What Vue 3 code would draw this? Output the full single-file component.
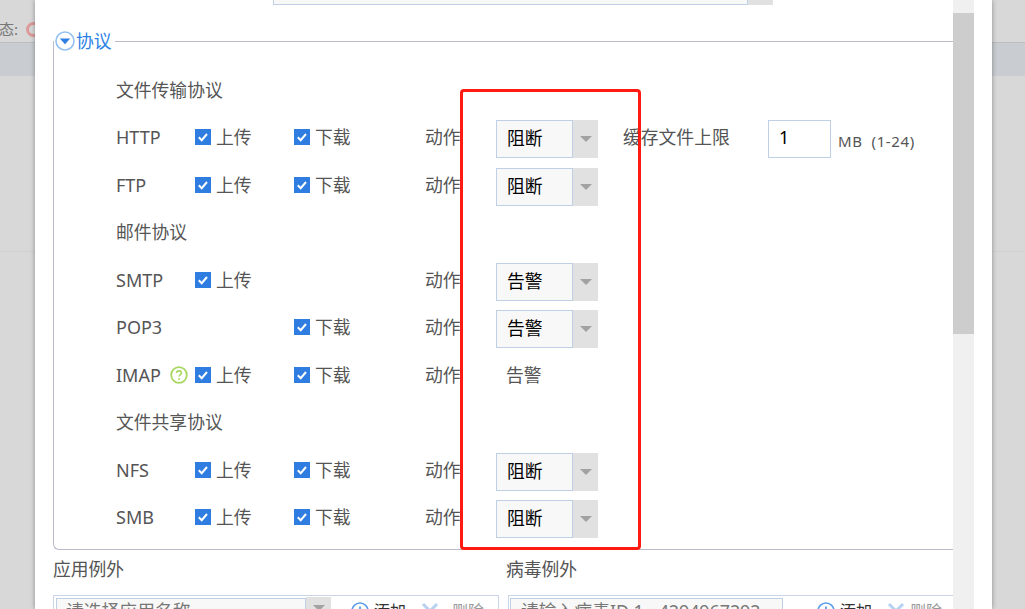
<script setup>
const rows = [
  { type: 'head', title: '文件传输协议' },
  { name: 'HTTP', up: true, down: true, action: '阻断', select: true, extra: true },
  { name: 'FTP', up: true, down: true, action: '阻断', select: true },
  { type: 'head', title: '邮件协议' },
  { name: 'SMTP', up: true, down: false, action: '告警', select: true },
  { name: 'POP3', up: false, down: true, action: '告警', select: true },
  { name: 'IMAP', help: true, up: true, down: true, action: '告警', select: false },
  { type: 'head', title: '文件共享协议' },
  { name: 'NFS', up: true, down: true, action: '阻断', select: true },
  { name: 'SMB', up: true, down: true, action: '阻断', select: true }
]
</script>

<template>
  <div class="page">
    <div class="backdrop">
      <div class="status-line">
        <span class="status-text">态:</span>
        <span class="status-dot"></span>
      </div>
      <div class="band"></div>
      <div class="rule"></div>
    </div>

    <div class="dialog">
      <div class="scroll-area">
        <div class="top-select">
          <div class="select-field wide"></div>
          <div class="select-arrow"><i class="tri"></i></div>
        </div>

        <div class="proto">
          <div class="proto-legend">
            <svg class="legend-icon" width="20" height="20" viewBox="0 0 20 20">
              <circle cx="10" cy="10" r="9" fill="#fff" stroke="#94c1f2" stroke-width="1.6" />
              <path d="M4.8 7.6h10.4L10 13.2z" fill="#2f7fe3" />
            </svg>
            <span>协议</span>
          </div>

          <template v-for="r in rows" :key="r.name || r.title">
            <div v-if="r.type === 'head'" class="row head">{{ r.title }}</div>
            <div v-else class="row">
              <div class="name">
                <span>{{ r.name }}</span>
                <svg v-if="r.help" class="help" width="18" height="18" viewBox="0 0 18 18">
                  <circle cx="9" cy="9" r="7.8" fill="#fff" stroke="#a9d862" stroke-width="1.8" />
                  <path d="M6.6 7.1c0-1.4 1-2.2 2.4-2.2s2.4.8 2.4 2.1c0 1.9-2.4 1.9-2.4 3.6" fill="none" stroke="#a9d862" stroke-width="1.6" />
                  <circle cx="9" cy="12.9" r="1" fill="#a9d862" />
                </svg>
              </div>
              <label class="check">
                <template v-if="r.up">
                  <svg class="box" width="16" height="16" viewBox="0 0 16 16">
                    <rect width="16" height="16" fill="#2f7de1" />
                    <path d="M3.8 8.2l2.9 3 5.3-6.2" fill="none" stroke="#fff" stroke-width="2" />
                  </svg>
                  <span>上传</span>
                </template>
              </label>
              <label class="check">
                <template v-if="r.down">
                  <svg class="box" width="16" height="16" viewBox="0 0 16 16">
                    <rect width="16" height="16" fill="#2f7de1" />
                    <path d="M3.8 8.2l2.9 3 5.3-6.2" fill="none" stroke="#fff" stroke-width="2" />
                  </svg>
                  <span>下载</span>
                </template>
              </label>
              <div class="action-label">动作</div>
              <div v-if="r.select" class="action-select">
                <div class="select-field">{{ r.action }}</div>
                <div class="select-arrow"><i class="tri"></i></div>
              </div>
              <div v-else class="action-plain">{{ r.action }}</div>
              <div v-if="r.extra" class="extra">
                <span class="extra-label">缓存文件上限</span>
                <div class="num-input">1</div>
                <span class="unit">MB&nbsp;&nbsp;(1-24)</span>
              </div>
            </div>
          </template>
        </div>

        <div class="exceptions">
          <section class="exc-col">
            <div class="exc-title">应用例外</div>
            <div class="exc-box">
              <div class="exc-select">
                <div class="select-field exc-field">请选择应用名称</div>
                <div class="select-arrow exc-arrow"><i class="tri"></i></div>
              </div>
              <div class="exc-actions">
                <span class="act add">
                  <svg width="18" height="18" viewBox="0 0 18 18"><circle cx="9" cy="9" r="8" fill="#fff" stroke="#5b9de8" stroke-width="1.6" /><path d="M9 4.5v9M4.5 9h9" stroke="#5b9de8" stroke-width="1.8" /></svg>
                  <span>添加</span>
                </span>
                <span class="act del">
                  <svg width="18" height="18" viewBox="0 0 18 18"><path d="M2 2l14 14M16 2L2 16" stroke="#b7d2f1" stroke-width="3" /></svg>
                  <span>删除</span>
                </span>
              </div>
            </div>
          </section>
          <section class="exc-col virus">
            <div class="exc-title">病毒例外</div>
            <div class="exc-box">
              <div class="select-field exc-field exc-input">请输入病毒ID 1 - 4294967292</div>
              <div class="exc-actions">
                <span class="act add">
                  <svg width="18" height="18" viewBox="0 0 18 18"><circle cx="9" cy="9" r="8" fill="#fff" stroke="#5b9de8" stroke-width="1.6" /><path d="M9 4.5v9M4.5 9h9" stroke="#5b9de8" stroke-width="1.8" /></svg>
                  <span>添加</span>
                </span>
                <span class="act del">
                  <svg width="18" height="18" viewBox="0 0 18 18"><path d="M2 2l14 14M16 2L2 16" stroke="#b7d2f1" stroke-width="3" /></svg>
                  <span>删除</span>
                </span>
              </div>
            </div>
          </section>
        </div>
      </div>

      <div class="scrollbar"><div class="thumb"></div></div>
    </div>

    <div class="annotation"></div>
  </div>
</template>

<style>
html, body { margin: 0; overflow: hidden; }
</style>

<style scoped>
.page {
  position: relative;
  width: 1025px;
  height: 609px;
  overflow: hidden;
  background: #d8d8d8;
  font-family: "Noto Sans", "Noto Sans CJK SC", sans-serif;
  color: #555;
  font-size: 17.8px;
}
.backdrop { display: flex; flex-direction: column; }
.status-line {
  height: 43px;
  display: flex;
  align-items: center;
  box-sizing: border-box;
  padding-top: 16px;
  margin-left: -1px;
  gap: 8px;
  border-bottom: 1px solid #bdbdbd;
  font-size: 15px;
  color: #777;
}
.status-text { line-height: 20px; }
.status-dot {
  flex: none;
  width: 15px;
  height: 15px;
  box-sizing: border-box;
  border: 3px solid #dc9a9a;
  border-radius: 50%;
}
.band { height: 33px; background: #c9ccd0; }
.rule { height: 175px; border-bottom: 1px solid #d0d0d0; }

.dialog {
  position: absolute;
  left: 35px;
  top: 0;
  width: 957px;
  height: 609px;
  background: #fff;
  box-shadow: 0 0 5px rgba(0, 0, 0, .35);
  display: flex;
}
.scroll-area {
  width: 918px;
  padding-left: 18px;
  box-sizing: border-box;
  overflow: hidden;
}
.scrollbar {
  width: 21px;
  height: 609px;
  background: #f0f0f0;
  padding-top: 13px;
  box-sizing: border-box;
}
.thumb { height: 321px; background: #cdcdcd; }

.top-select {
  display: flex;
  height: 38px;
  margin: -33px 0 0 220px;
}
.select-field {
  box-sizing: border-box;
  width: 77px;
  height: 38px;
  background: #f8f8f8;
  border: 1px solid #bfd0e4;
  color: #000;
  line-height: 36px;
  padding-left: 10px;
}
.select-field.wide { width: 475px; }
.select-arrow {
  width: 25px;
  height: 38px;
  background: #e1e1e1;
  display: flex;
  align-items: center;
  justify-content: center;
}
.tri {
  width: 0;
  height: 0;
  border-left: 6px solid transparent;
  border-right: 6px solid transparent;
  border-top: 6px solid #a2a2a2;
}

.proto {
  position: relative;
  box-sizing: border-box;
  width: 910px;
  height: 509px;
  margin-top: 36px;
  padding: 24.75px 0 0 62px;
  border: 1px solid #b9bbc8;
  border-right: 0;
  border-radius: 0 0 0 6px;
}
.proto-legend {
  position: absolute;
  left: 0;
  top: -13px;
  padding: 0 3px 0 1px;
  background: #fff;
  display: flex;
  align-items: center;
  gap: 1px;
  color: #2c81e4;
  height: 24px;
  line-height: 22px;
}
.legend-icon { display: block; }

.row {
  box-sizing: border-box;
  height: 47.5px;
  padding-bottom: 2px;
  display: flex;
  align-items: center;
  line-height: 24px;
  white-space: nowrap;
}
.name {
  width: 79px;
  display: flex;
  align-items: center;
  gap: 9px;
  font-size: 18px;
}
.help { flex: none; }
.check {
  width: 99px;
  display: flex;
  align-items: center;
  gap: 5px;
}
.check + .check { width: 131px; }
.box { flex: none; }
.action-label { width: 71px; }
.action-select { display: flex; margin-top: 4px; }
.action-select .select-field { line-height: 34px; }
.action-plain { padding-left: 10px; }
.extra {
  display: flex;
  align-items: center;
  margin-left: 25px;
}
.extra-label { width: 145px; margin-left: -1px; padding-left: 1px; }
.num-input {
  box-sizing: border-box;
  width: 63px;
  height: 38px;
  margin-top: 4px;
  border: 1px solid #bfd0e4;
  color: #000;
  line-height: 32px;
  padding-left: 10px;
}
.unit {
  margin-left: 7px;
  font-size: 15px;
  margin-top: 8px;
  letter-spacing: .6px;
}

.exceptions {
  display: flex;
  width: 900px;
  margin-top: 7px;
}
.exc-col { width: 453px; flex: none; }
.exc-col.virus { width: 447px; }
.exc-title { height: 38px; line-height: 24px; }
.exc-box {
  box-sizing: border-box;
  width: 446px;
  height: 60px;
  border: 1px solid #c9d6e8;
  padding: 2px;
  display: flex;
}
.virus .exc-box { margin-left: 2px; width: 448px; padding-left: 1px; }
.exc-select { display: flex; }
.exc-field {
  width: 250px;
  height: 30px;
  color: #777;
  line-height: 24px;
  padding-left: 9px;
}
.exc-input { width: 273px; padding-left: 10px; }
.exc-arrow { height: 22px; margin-top: -1px; }
.exc-actions {
  display: flex;
  align-items: flex-start;
  padding-top: 3px;
  margin-left: 20px;
  gap: 15px;
}
.virus .exc-actions { margin-left: 34px; }
.act {
  display: flex;
  align-items: center;
  gap: 5px;
  font-size: 16px;
  line-height: 20px;
}
.act.add { color: #333; }
.act.del { color: #999; gap: 13px; }
.virus .act.del { gap: 5px; }

.annotation {
  position: absolute;
  left: 460px;
  top: 89px;
  width: 181px;
  height: 461px;
  box-sizing: border-box;
  border: 3px solid #ff1a12;
  border-radius: 4px;
}
</style>
